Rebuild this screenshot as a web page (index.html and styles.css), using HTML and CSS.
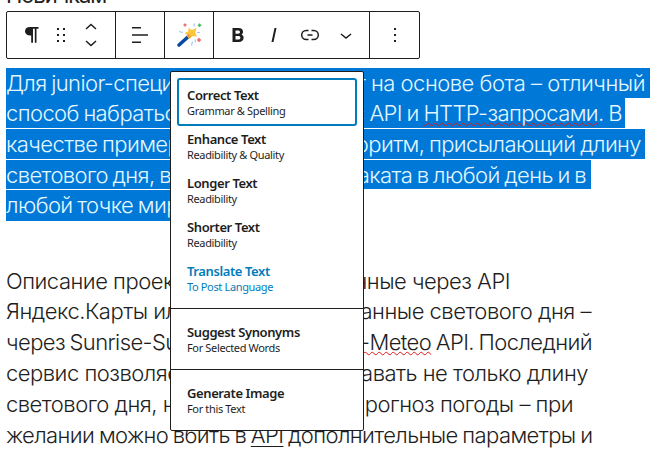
FILE: index.html
```html
<!DOCTYPE html>
<html lang="ru">
<head>
<meta charset="utf-8">
<title>Editor</title>
<link rel="stylesheet" href="styles.css">
</head>
<body>
<main class="editor">
  <div class="heading">Новичкам</div>
  <div class="toolbar">
    <div class="group block">
      <svg width="24" height="24" viewBox="0 0 24 24"><path d="M11 4h8.500v1.700h-2v14h-1.700v-14h-1.800v14h-1.800v-7.200C8.500 12.500 6 11 6 8.200 6 5.500 8 4 11 4z"/></svg>
      <svg width="24" height="24" viewBox="0 0 24 24"><path d="M8 5h2v2H8zM14 5h2v2h-2zM8 11h2v2H8zM14 11h2v2h-2zM8 17h2v2H8zM14 17h2v2h-2z"/></svg>
      <svg class="line" width="24" height="28" viewBox="0 0 24 28"><path d="M7 8l5-4.500L17 8M7 20l5 4.500 5-4.500"/></svg>
    </div>
    <div class="group single"><svg width="24" height="24" viewBox="0 0 24 24"><path d="M4 4h9v1.500H4zM4 11.200h16v1.600H4zM4 18.500h9V20H4z"/></svg></div>
    <div class="group single">
      <svg width="26" height="26" viewBox="0 0 26 26"><path d="M3 23L13 14" stroke="#0b4a9e" stroke-width="3.600" stroke-linecap="round"/><path d="M12.500 6l3.300 2 4.700-2-1.300 4.700 1.800 3.800-4.500-.2-3.500 3-1.200-4.300-3.500-2 4-1.400z" fill="#fcc53c"/><path d="M12 11.500l3 3-2 2-2.500-2.500z" fill="#f59b35"/><path d="M9 1.500v3M7.500 3h3M23 16v4M21 18h4" stroke="#f06a5f" stroke-width="1.500"/><path d="M23.500 1.500v3.500M21.800 3.200h3.500" stroke="#42bd61" stroke-width="1.500"/><path d="M3 9.500l4 1M16.500 19.500l-1 4M19 17.500l.5 3M18 4.500l.5-3M21 10.500h3" stroke="#a9c6f2" stroke-width="1.200"/></svg>
    </div>
    <div class="group format">
      <svg width="24" height="24" viewBox="0 0 24 24"><path d="M6.500 5h6c3 0 4.500 1.400 4.500 3.700 0 1.300-.6 2.300-1.700 2.900 1.500.5 2.300 1.600 2.300 3.200 0 2.600-1.800 4.200-4.900 4.200H6.500zm3 2.400v3.300H12c1.300 0 2-.6 2-1.700 0-1-.7-1.600-2-1.600zm0 5.500v3.600h2.800c1.400 0 2.100-.6 2.100-1.800s-.8-1.800-2.200-1.800z"/></svg>
      <svg width="24" height="24" viewBox="0 0 24 24"><path d="M12.500 5h2l-3 14h-2z"/></svg>
      <svg class="line" width="24" height="24" viewBox="0 0 24 24"><path d="M10.500 7.500H8.200a4.500 4.500 0 0 0 0 9h2.300M13.500 7.500h2.300a4.500 4.500 0 0 1 0 9h-2.300M9.500 12h5"/></svg>
      <svg class="line" width="24" height="24" viewBox="0 0 24 24"><path d="M7 11l5 4 5-4"/></svg>
    </div>
    <div class="group single"><svg width="24" height="24" viewBox="0 0 24 24"><path d="M11 5h2v2h-2zM11 11h2v2h-2zM11 17h2v2h-2z"/></svg></div>
  </div>

  <div class="paragraph selected">
    <div class="row w1"><span class="tight">Для junior-специ</span><span>т на основе бота – отличный</span></div>
    <div class="row w2 tight"><span>способ набратьс</span><span>с API и <u class="spell">HTTP-запросами</u>. В</span></div>
    <div class="row w3 tight"><span>качестве пример</span><span>оритм, присылающий длину</span></div>
    <div class="row w4 tight"><span>светового дня, в</span><span>аката в любой день и в</span></div>
    <div class="row w5 tight"><span>любой точке мир</span></div>
  </div>
  <div class="paragraph">
    <div class="row w6"><span>Описание проект</span><span>нные через API</span></div>
    <div class="row w7"><span>Яндекс.Карты ил</span><span>анные светового дня –</span></div>
    <div class="row w8 tight"><span>через Sunrise-Su</span><span><u class="spell">-Meteo</u> API. Последний</span></div>
    <div class="row w9"><span>сервис позволяе</span><span>авать не только длину</span></div>
    <div class="row w10"><span>светового дня, н</span><span>прогноз погоды – при</span></div>
    <div class="row w11 tight"><span>желании можно вбить в <u>API</u> дополнительные параметры и</span></div>
  </div>

  <div class="menu">
    <section class="actions">
      <div class="item active"><b>Correct Text</b><small>Grammar &amp; Spelling</small></div>
      <div class="item"><b>Enhance Text</b><small>Readibility &amp; Quality</small></div>
      <div class="item"><b>Longer Text</b><small>Readibility</small></div>
      <div class="item"><b>Shorter Text</b><small>Readibility</small></div>
      <div class="item accent"><b>Translate Text</b><small>To Post Language</small></div>
    </section>
    <section><div class="item"><b>Suggest Synonyms</b><small>For Selected Words</small></div></section>
    <section><div class="item"><b>Generate Image</b><small>For this Text</small></div></section>
  </div>
</main>
</body>
</html>
```
FILE: styles.css
```css
* { box-sizing: border-box; }
body { margin: 0; background: #fff; color: #1e1e1e; }
.editor { position: relative; width: 666px; height: 452px; overflow: hidden; padding: 0 6px; font: 300 22px/30.8px Inter, "Open Sans", sans-serif; }
.heading { height: 11px; line-height: 24px; display: flex; align-items: flex-end; font-weight: 400; letter-spacing: -1.1px; }
.toolbar { display: flex; width: 414px; height: 48px; border: 1px solid #1e1e1e; border-radius: 2px; background: #fff; }
.toolbar svg { display: block; fill: #1e1e1e; flex: none; }
.toolbar .line { fill: none; stroke: #1e1e1e; stroke-width: 1.5; }
.group { display: flex; align-items: center; border-right: 1px solid #1e1e1e; }
.group:last-child { border-right: 0; }
.block { width: 109px; padding-left: 12px; gap: 6px; }
.single { width: 49px; justify-content: center; }
.format { width: 157px; padding-left: 12px; gap: 12px; }
.heading { padding-bottom: 4px; }
.paragraph { margin-top: 9px; }
.paragraph + .paragraph { margin-top: 44.4px; }
.row { display: flex; justify-content: space-between; white-space: pre; height: 30.8px; letter-spacing: -.5px; }
.tight { letter-spacing: -.6px; word-spacing: -1px; }
.selected .row { background: #0078d7; color: #e3f7ff; border-bottom: 1px solid #fff; padding-right: 5px; }
.selected .row:first-child { height: 30px; border-bottom: 0; }
.selected .row:last-child { border-bottom: 0; }
.w1 { width: 644px; }
.selected .w2 { width: 619px; padding-right: 3px; }
.selected .w3 { width: 639px; padding-right: 4px; }
.w4 { width: 585px; }
.w5 { width: 200px; }
.w6 { width: 504px; }
.w7 { width: 585px; }
.w8 { width: 586px; }
.w9 { width: 582px; }
.w10 { width: 567px; }
.w11 { width: 587px; }
u { text-decoration-thickness: 1px; text-underline-offset: 3px; }
.spell { text-decoration: underline wavy #e01818 1.2px; text-decoration-skip-ink: none; text-underline-offset: 1px; }
.menu { position: absolute; left: 170px; top: 71px; width: 194px; height: 360px; border: 1px solid #1e1e1e; border-radius: 2px; background: #fff; font-family: "Noto Sans", "Open Sans", sans-serif; }
.menu section { height: 61px; padding: 7px 6px; border-top: 1px solid #1e1e1e; }
.menu .actions { height: 236px; padding-top: 6px; border: 0; }
.item { height: 44px; padding: 8px 10px 0; line-height: 16px; }
.item b, .item small { display: block; }
.item b { font-size: 13px; font-weight: 600; letter-spacing: -.4px; }
.item small { font-size: 11px; font-weight: 400; line-height: 15px; letter-spacing: -.35px; }
.active { height: 48px; margin-bottom: -3px; padding: 7px 8px 0; border: 2px solid #007cba; border-radius: 3px; }
.accent { color: #007cba; }
```
